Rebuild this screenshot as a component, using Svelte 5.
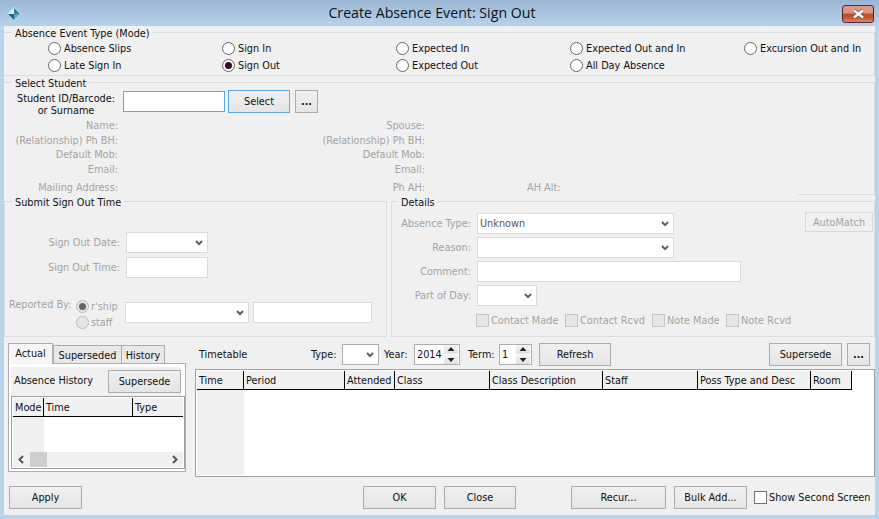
<script>
  const modes = [
    { label: 'Absence Slips' }, { label: 'Sign In' }, { label: 'Expected In' }, { label: 'Expected Out and In' }, { label: 'Excursion Out and In' },
    { label: 'Late Sign In' }, { label: 'Sign Out', checked: true }, { label: 'Expected Out' }, { label: 'All Day Absence' }
  ];
  const historyCols = [{ name: 'Mode', w: 31 }, { name: 'Time', w: 89 }, { name: 'Type', w: 50 }];
  const timetableCols = [
    { name: 'Time', w: 47 }, { name: 'Period', w: 101 }, { name: 'Attended', w: 50 }, { name: 'Class', w: 95 },
    { name: 'Class Description', w: 113 }, { name: 'Staff', w: 95 }, { name: 'Poss Type and Desc', w: 113 }, { name: 'Room', w: 41 }
  ];
  const notes = ['Contact Made', 'Contact Rcvd', 'Note Made', 'Note Rcvd'];
</script>

{#snippet chevron()}
  <svg class="chev" width="8" height="6" viewBox="0 0 8 6"><path d="M1 1 4 4.200 7 1" fill="none" stroke="#5c5c5c" stroke-width="1.900" /></svg>
{/snippet}

{#snippet spinner(value, width)}
  <div class="spin" style="width:{width}px">
    <span>{value}</span>
    <div class="spin-btns">
      <svg width="14" height="9" viewBox="0 0 14 9"><path d="M7 2 10.500 6H3.500Z" fill="#222" /></svg>
      <svg width="14" height="9" viewBox="0 0 14 9"><path d="M7 7 10.500 3H3.500Z" fill="#222" /></svg>
    </div>
  </div>
{/snippet}

<div class="window">
  <header class="titlebar">
    <svg class="app-icon" width="16" height="16" viewBox="0 0 16 16">
      <path d="M8 .5 15.500 8 8 15.500 .5 8Z" fill="#a9dfdc" />
      <path d="M8 2 14 8H8Z" fill="#2f7aa8" />
      <path d="M8 2 2 8H8Z" fill="#d8eef2" />
      <path d="M2 8 8 14V8Z" fill="#1f5f8c" />
      <path d="M8 8 8 14 14 8Z" fill="#5fa6c9" />
    </svg>
    <h1>Create Absence Event: Sign Out</h1>
    <button class="close" aria-label="Close">
      <svg width="13" height="10" viewBox="0 0 13 10"><path d="M2 1.500 11 8.500M11 1.500 2 8.500" stroke="#555" stroke-width="3.600" /><path d="M2 1.500 11 8.500M11 1.500 2 8.500" stroke="#fff" stroke-width="2.400" /></svg>
    </button>
  </header>

  <main class="body">
    <fieldset class="group mode">
      <legend>Absence Event Type (Mode)</legend>
      <div class="mode-grid">
        {#each modes as mode}
          <label class="opt"><input type="radio" name="mode" checked={mode.checked} />{mode.label}</label>
        {/each}
      </div>
    </fieldset>

    <fieldset class="group student">
      <legend>Select Student</legend>
      <div class="student-row">
        <div class="student-label">Student ID/Barcode:<br />or Surname</div>
        <div class="field focus" style="width:102px"></div>
        <button class="btn focus select">Select</button>
        <button class="btn more">...</button>
      </div>
      <div class="info">
        <span>Name:</span><span>Spouse:</span><span></span>
        <span>(Relationship) Ph BH:</span><span>(Relationship) Ph BH:</span><span></span>
        <span>Default Mob:</span><span>Default Mob:</span><span></span>
        <span>Email:</span><span>Email:</span><span></span>
        <span>Mailing Address:</span><span>Ph AH:</span><span class="alt">AH Alt:</span>
      </div>
      <div class="tail"></div>
    </fieldset>

    <div class="mid">
      <fieldset class="group submit">
        <legend>Submit Sign Out Time</legend>
        <div class="time-grid">
          <span class="dim">Sign Out Date:</span>
          <div class="field combo" style="width:82px">{@render chevron()}</div>
          <span class="dim">Sign Out Time:</span>
          <div class="field" style="width:82px"></div>
        </div>
        <div class="reported">
          <span class="dim rep-label">Reported By:</span>
          <div class="rep-opts dim">
            <label class="opt off"><input type="radio" name="rep" checked disabled />r'ship</label>
            <label class="opt off"><input type="radio" name="rep" disabled />staff</label>
          </div>
          <div class="field combo rep-combo">{@render chevron()}</div>
          <div class="field rep-field"></div>
        </div>
      </fieldset>

      <fieldset class="group details">
        <legend>Details</legend>
        <div class="details-top">
          <div class="details-grid">
            <span class="dim">Absence Type:</span>
            <div class="field combo dark" style="width:197px">Unknown{@render chevron()}</div>
            <span class="dim">Reason:</span>
            <div class="field combo" style="width:197px">{@render chevron()}</div>
            <span class="dim">Comment:</span>
            <div class="field" style="width:264px"></div>
            <span class="dim">Part of Day:</span>
            <div class="field combo" style="width:60px">{@render chevron()}</div>
          </div>
          <button class="btn automatch" disabled>AutoMatch</button>
        </div>
        <div class="checks">
          {#each notes as note}
            <label class="check dim"><input type="checkbox" disabled />{note}</label>
          {/each}
        </div>
      </fieldset>
    </div>

    <div class="lower">
      <section class="history">
        <div class="tabs">
          <span class="tab active">Actual</span>
          <span class="tab t2">Superseded</span>
          <span class="tab t3">History</span>
        </div>
        <div class="tab-panel">
          <div class="history-head">
            <span>Absence History</span>
            <button class="btn" style="width:73px">Supersede</button>
          </div>
          <div class="table small">
            <div class="thead">
              {#each historyCols as col}
                <span style="width:{col.w}px">{col.name}</span>
              {/each}
            </div>
            <div class="tbody"><div class="rowhead" style="width:31px"></div></div>
            <div class="hscroll">
              <svg width="17" height="15" viewBox="0 0 17 15"><path d="M10 4 6.500 7.500 10 11" fill="none" stroke="#555" stroke-width="2" /></svg>
              <div class="thumb"></div>
              <svg class="right" width="17" height="15" viewBox="0 0 17 15"><path d="M7 4 10.500 7.500 7 11" fill="none" stroke="#555" stroke-width="2" /></svg>
            </div>
          </div>
        </div>
      </section>

      <section class="timetable">
        <div class="toolbar">
          <span class="tt-title">Timetable</span>
          <span class="tl" style="width:31px">Type:</span>
          <div class="field combo strong" style="width:37px">{@render chevron()}</div>
          <span class="tl year" style="width:30px">Year:</span>
          {@render spinner('2014', 46)}
          <span class="tl term" style="width:31px">Term:</span>
          {@render spinner('1', 33)}
          <button class="btn refresh">Refresh</button>
          <button class="btn supersede">Supersede</button>
          <button class="btn more last">...</button>
        </div>
        <div class="table big">
          <div class="thead">
            {#each timetableCols as col}
              <span style="width:{col.w}px">{col.name}</span>
            {/each}
          </div>
          <div class="tbody"><div class="rowhead" style="width:47px"></div></div>
        </div>
      </section>
    </div>

    <footer class="actions">
      <button class="btn apply">Apply</button>
      <button class="btn ok">OK</button>
      <button class="btn closeb">Close</button>
      <button class="btn recur">Recur...</button>
      <button class="btn bulk">Bulk Add...</button>
      <label class="check second"><input type="checkbox" />Show Second Screen</label>
    </footer>
  </main>
</div>

<style>
  :global(body) { margin: 0; background: #b9d3ec; }
  .window { width: 879px; height: 519px; overflow: hidden; display: flex; flex-direction: column; color: #111; font: 10.8px/13px "DejaVu Sans", sans-serif; font-stretch: condensed; background: #b9d3ec; }
  .titlebar { height: 26px; flex: none; display: flex; align-items: center; position: relative; justify-content: center; background: linear-gradient(#9bb6d5, #b8d2eb); }
  .titlebar h1 { margin: 0 0 0 -15px; font: 400 14.200px/20px "Open Sans", sans-serif; color: #111; }
  .app-icon { position: absolute; left: 6px; top: 6px; }
  .close { position: absolute; left: 842px; top: 5px; width: 32px; height: 18px; padding: 0; border: 1px solid #4a2a3c; border-radius: 3px; display: flex; align-items: center; justify-content: center; background: linear-gradient(#e39a8a 0, #dd8e7e 45%, #b94a26 50%, #c65a38 75%, #d58a72 100%); }
  .body { margin: 0 4px; width: 871px; height: 489px; background: #f0f0f0; }

  .group { margin: 0; padding: 0; border: 1px solid #dcdcdc; box-sizing: border-box; min-width: 0; }
  .group legend { margin-left: 7px; padding: 0 3px; line-height: 13px; color: #111; transform: translateY(1px); }
  .mode { height: 50px; border-width: 1px 0 1px 0; border-right: 1px solid #dcdcdc; }
  .mode legend { margin-left: 8px; }
  .mode-grid { display: grid; grid-template-columns: repeat(5, 174px); grid-auto-rows: 17px; padding: 1px 0 0 44px; }
  .opt { display: flex; align-items: center; gap: 3px; white-space: nowrap; }
  input[type="radio"] { appearance: none; width: 13px; height: 13px; margin: 0; border: 1px solid #666; border-radius: 50%; background: #fff; box-sizing: border-box; display: grid; place-items: center; }
  input[type="radio"]:checked::before { content: ""; width: 7px; height: 7px; border-radius: 50%; background: #3a0c24; }
  input[type="radio"]:disabled { border-color: #bbb; background: #e6e6e6; }
  input[type="radio"]:disabled:checked::before { background: #666; }
  input[type="checkbox"] { appearance: none; width: 13px; height: 13px; margin: 0; border: 1px solid #707070; background: #fff; box-sizing: border-box; flex: none; }
  input[type="checkbox"]:disabled { border-color: #c4c4c4; background: #e6e6e6; }

  .student { height: 119px; border-width: 1px 0 0 0; border-right: 1px solid #dcdcdc; }
  .student legend { margin-left: 8px; }
  .student-row { display: flex; align-items: center; height: 23px; margin-top: 1px; }
  .student-label { width: 100px; margin-left: 12px; margin-right: 7px; text-align: center; line-height: 11.500px; padding-top: 6px; }
  .field { height: 21px; box-sizing: border-box; border: 1px solid #dadada; background: #fff; flex: none; position: relative; display: flex; align-items: center; padding-left: 2px; }
  .field.focus { border-color: #5aa9e6; }
  .btn { height: 23px; box-sizing: border-box; padding: 0; border: 1px solid #acacac; background: linear-gradient(#f0f0f0, #e5e5e5); color: #111; font: inherit; font-stretch: condensed; flex: none; }
  .btn.focus { border-color: #5aa9e6; }
  .select { width: 62px; margin-left: 3px; }
  .more { width: 23px; margin-left: 5px; font-weight: 700; }
  .info { display: grid; grid-template-columns: 114px 307px auto; grid-template-rows: 15px 14px 15px 18px 14px; margin-top: 6px; color: #a3a3a3; text-align: right; line-height: 14px; }
  .alt { text-align: left; margin-left: 102px; }
  .tail { width: 76px; margin-left: auto; border-top: 1px solid #dcdcdc; margin-top: -1px; }

  .mid { display: flex; gap: 4px; height: 142px; }
  .submit { width: 383px; }
  .details { width: 484px; }
  .details legend { margin-left: 6px; }
  .dim { color: #a3a3a3; }
  .time-grid { display: grid; grid-template-columns: 115px auto; column-gap: 6px; row-gap: 4px; grid-auto-rows: 21px; align-items: center; justify-items: start; margin-top: 24px; }
  .time-grid > span { justify-self: end; }
  .chev { position: absolute; right: 4px; top: 7px; }
  .reported { display: flex; align-items: flex-start; margin: 19px 0 0 4px; }
  .rep-label { width: 67px; flex: none; padding-top: 1px; }
  .rep-opts { display: flex; flex-direction: column; gap: 3px; margin-top: 3px; width: 49px; flex: none; }
  .opt.off { color: #a3a3a3; gap: 2px; }
  .rep-combo { width: 124px; margin-top: 5px; }
  .rep-field { width: 119px; margin: 5px 0 0 4px; }
  .details-top { display: flex; align-items: flex-start; margin-top: 5px; }
  .details-grid { display: grid; grid-template-columns: 79px auto; column-gap: 6px; row-gap: 3px; grid-auto-rows: 21px; align-items: center; justify-items: start; }
  .details-grid > span { justify-self: end; }
  .dark { color: #555; }
  .automatch { width: 68px; height: 20px; margin: -1px 1px 0 auto; color: #a3a3a3; border-color: #d8d8d8; background: #f0f0f0; }
  .checks { display: grid; grid-template-columns: 89px 87px 74px auto; margin: 8px 0 0 84px; }
  .check { display: flex; align-items: center; gap: 2px; white-space: nowrap; }

  .lower { display: flex; margin-top: 6px; height: 134px; }
  .history { width: 178px; margin-left: 4px; flex: none; }
  .tabs { display: flex; height: 20px; align-items: flex-end; position: relative; z-index: 1; }
  .tab { box-sizing: border-box; height: 18px; border: 1px solid #acacac; border-bottom: 0; background: #e8e8e8; display: flex; align-items: center; justify-content: center; margin-left: -1px; padding-top: 2px; }
  .tab.active { width: 45px; height: 21px; margin: 0 0 -1px 0; padding: 0 0 2px; background: #f6f6f6; }
  .tab.t2 { width: 69px; margin-left: 0; }
  .t3 { width: 44px; }
  .tab-panel { box-sizing: border-box; height: 109px; border: 1px solid #acacac; background: #fff; padding: 3px 2px; position: relative; }
  .history-head { height: 29px; width: 170px; background: #f0f0f0; display: flex; justify-content: space-between; box-sizing: border-box; padding: 3px 0 0 3px; }
  .history-head span { margin-top: 4px; }
  .table { box-sizing: border-box; border: 1px solid #a0a0a0; background: #fff; padding: 1px; display: flex; flex-direction: column; }
  .small { width: 174px; height: 73px; }
  .thead { display: flex; height: 19px; flex: none; box-sizing: border-box; border-bottom: 1px solid #000; background: #f0f0f0; }
  .thead span { box-sizing: border-box; border-right: 1px solid #000; padding: 3px 0 0 2px; white-space: nowrap; overflow: hidden; flex: none; }
  .thead span:last-child { border-right: 0; }
  .tbody { flex: 1; display: flex; min-height: 0; }
  .rowhead { background: #f0f0f0; }
  .hscroll { display: flex; height: 15px; flex: none; background: #f0f0f0; }
  .thumb { width: 17px; background: #cdcdcd; }
  .hscroll .right { margin-left: auto; }

  .timetable { width: 680px; margin-left: 9px; flex: none; }
  .toolbar { display: flex; align-items: center; height: 23px; margin-bottom: 3px; }
  .tt-title { width: 112px; margin-left: 4px; }
  .tl { flex: none; }
  .year { margin-left: 5px; }
  .term { margin-left: 8px; }
  .strong { border-color: #acacac; }
  .spin { height: 21px; box-sizing: border-box; border: 1px solid #acacac; background: #fff; display: flex; align-items: center; justify-content: space-between; padding-left: 2px; flex: none; color: #111; }
  .spin-btns { display: flex; flex-direction: column; width: 14px; height: 19px; margin-right: 1px; }
  .spin-btns svg { background: linear-gradient(#f2f2f2, #e2e2e2); flex: none; display: block; height: 9px; margin-bottom: 1px; }
  .refresh { width: 72px; margin-left: 7px; }
  .supersede { width: 73px; margin-left: auto; }
  .last { margin-right: 5px; }
  .big { width: 680px; height: 108px; }
  .big .thead { background: linear-gradient(to right, #f0f0f0 654px, #fff 654px); border-bottom: 0; }
  .big .thead span { border-bottom: 1px solid #000; }
  .big .thead span:last-child { border-right: 1px solid #000; }

  .actions { display: flex; align-items: center; height: 23px; margin-top: 9px; }
  .apply { width: 73px; margin-left: 5px; }
  .ok { width: 73px; margin-left: 281px; }
  .closeb { width: 72px; margin-left: 8px; }
  .recur { width: 95px; margin-left: 55px; }
  .bulk { width: 73px; margin-left: 8px; }
  .second { margin-left: 7px; }
</style>
